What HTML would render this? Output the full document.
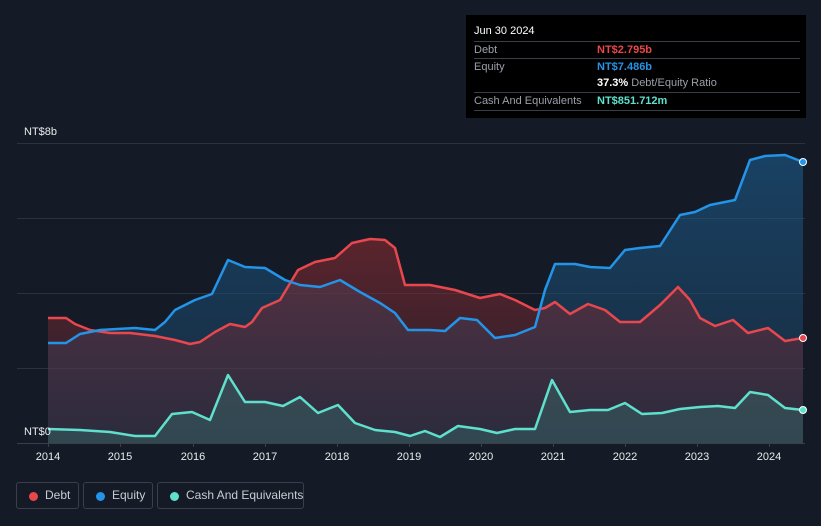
<!DOCTYPE html>
<html><head><style>
html,body{margin:0;width:821px;height:526px;overflow:hidden}
body{background:#151b26;font-family:"Liberation Sans",sans-serif;position:relative}
.tt{position:absolute;left:466px;top:15px;width:340px;height:103px;background:#000;color:#fff;font-size:11px}
.tt .h{position:absolute;left:8px;top:10px;font-size:11px}
.row{position:absolute;left:8px;width:326px;border-top:1px solid #3a3f47;height:17px;line-height:17px;white-space:nowrap}
.row span.l{color:#9aa0a8}
.row span.v{position:absolute;left:123px;font-weight:bold}
.leg{position:absolute;top:482px;height:27px;border:1px solid #3a3f4a;border-radius:3px;color:#c8ccd2;font-size:12px;line-height:25px;box-sizing:border-box;white-space:nowrap}
.leg i{position:absolute;top:9px;width:9px;height:9px;border-radius:50%}
.ax{position:absolute;top:451px;color:#e8eaed;font-size:11px;width:40px;text-align:center}
</style></head><body>
<svg width="821" height="526" style="position:absolute;left:0;top:0">
<defs>
<linearGradient id="gb" x1="0" y1="0" x2="0" y2="1"><stop offset="0" stop-color="#1c5b8c" stop-opacity=".6"/><stop offset="1" stop-color="#1c4a70" stop-opacity=".35"/></linearGradient>
<linearGradient id="gr" x1="0" y1="0" x2="0" y2="1"><stop offset="0" stop-color="#8a2a30" stop-opacity=".6"/><stop offset="1" stop-color="#5a2a35" stop-opacity=".3"/></linearGradient>
</defs>
<g stroke="#2c323d" stroke-width="1">
<line x1="17" y1="143.5" x2="805" y2="143.5"/><line x1="17" y1="218.5" x2="805" y2="218.5"/><line x1="17" y1="293.5" x2="805" y2="293.5"/><line x1="17" y1="368.5" x2="805" y2="368.5"/></g>
<polygon fill="url(#gb)" points="48,443 48,343 66,343 80,334 100,330 135,328 155,330 165,322 175,310 195,300 212,294 228,260 245,267 265,268 285,280 300,285 320,287 340,280 360,292 380,303 395,313 408,330 430,330 445,331 460,318 477,320 495,338 515,335 535,327 545,290 555,264 575,264 590,267 610,268 625,250 640,248 660,246 680,215 695,212 710,205 735,200 750,160 765,156 785,155 803,162 803,443"/>
<polygon fill="url(#gr)" points="48,443 48,318 66,318 75,324 90,330 110,333 130,333 155,336 175,340 190,344 200,342 215,332 230,324 245,327 252,322 262,308 280,300 298,270 315,262 335,258 352,243 370,239 385,240 395,248 405,285 430,285 455,290 480,298 500,294 515,300 535,310 545,308 555,302 570,314 588,304 605,310 620,322 640,322 660,305 678,287 690,300 700,318 715,326 733,320 748,333 768,328 785,341 803,338 803,443"/>
<polygon fill="#3a6a6a" fill-opacity=".45" points="48,443 48,429 80,430 110,432 135,436 155,436 172,414 192,412 210,420 228,375 245,402 265,402 283,406 300,397 318,413 338,405 355,423 375,430 395,432 410,436 425,431 440,437 458,426 480,429 497,433 515,429 535,429 552,380 570,412 590,410 608,410 625,403 642,414 662,413 680,409 700,407 718,406 735,408 750,392 768,395 785,408 803,410 803,443"/>
<g fill="none" stroke-width="2.5" stroke-linejoin="round">
<polyline stroke="#e8474d" points="48,318 66,318 75,324 90,330 110,333 130,333 155,336 175,340 190,344 200,342 215,332 230,324 245,327 252,322 262,308 280,300 298,270 315,262 335,258 352,243 370,239 385,240 395,248 405,285 430,285 455,290 480,298 500,294 515,300 535,310 545,308 555,302 570,314 588,304 605,310 620,322 640,322 660,305 678,287 690,300 700,318 715,326 733,320 748,333 768,328 785,341 803,338"/>
<polyline stroke="#2394e8" points="48,343 66,343 80,334 100,330 135,328 155,330 165,322 175,310 195,300 212,294 228,260 245,267 265,268 285,280 300,285 320,287 340,280 360,292 380,303 395,313 408,330 430,330 445,331 460,318 477,320 495,338 515,335 535,327 545,290 555,264 575,264 590,267 610,268 625,250 640,248 660,246 680,215 695,212 710,205 735,200 750,160 765,156 785,155 803,162"/>
<polyline stroke="#5ee0cc" points="48,429 80,430 110,432 135,436 155,436 172,414 192,412 210,420 228,375 245,402 265,402 283,406 300,397 318,413 338,405 355,423 375,430 395,432 410,436 425,431 440,437 458,426 480,429 497,433 515,429 535,429 552,380 570,412 590,410 608,410 625,403 642,414 662,413 680,409 700,407 718,406 735,408 750,392 768,395 785,408 803,410"/>
</g>
<circle cx="803" cy="162" r="3.5" fill="#2394e8" stroke="#fff" stroke-width="1"/>
<circle cx="803" cy="338" r="3.5" fill="#e8474d" stroke="#fff" stroke-width="1"/>
<circle cx="803" cy="410" r="3.5" fill="#5ee0cc" stroke="#fff" stroke-width="1"/>
<line x1="17" y1="443.5" x2="805" y2="443.5" stroke="#3a404a"/>
<g stroke="#3a404a"><line x1="48.5" y1="443" x2="48.5" y2="447"/><line x1="120.5" y1="443" x2="120.5" y2="447"/><line x1="193.5" y1="443" x2="193.5" y2="447"/><line x1="265.5" y1="443" x2="265.5" y2="447"/><line x1="337.5" y1="443" x2="337.5" y2="447"/><line x1="409.5" y1="443" x2="409.5" y2="447"/><line x1="481.5" y1="443" x2="481.5" y2="447"/><line x1="553.5" y1="443" x2="553.5" y2="447"/><line x1="625.5" y1="443" x2="625.5" y2="447"/><line x1="697.5" y1="443" x2="697.5" y2="447"/><line x1="769.5" y1="443" x2="769.5" y2="447"/></g>
<text x="24" y="135" fill="#e8eaed" font-size="11" font-family="Liberation Sans">NT$8b</text>
<text x="24" y="435" fill="#e8eaed" font-size="11" font-family="Liberation Sans">NT$0</text>
</svg>
<div class="ax" style="left:28px">2014</div><div class="ax" style="left:100px">2015</div><div class="ax" style="left:173px">2016</div><div class="ax" style="left:245px">2017</div><div class="ax" style="left:317px">2018</div><div class="ax" style="left:389px">2019</div><div class="ax" style="left:461px">2020</div><div class="ax" style="left:533px">2021</div><div class="ax" style="left:605px">2022</div><div class="ax" style="left:677px">2023</div><div class="ax" style="left:749px">2024</div>
<div class="tt">
<div class="h">Jun 30 2024</div>
<div class="row" style="top:26px"><span class="l">Debt</span><span class="v" style="color:#e8474d">NT$2.795b</span></div>
<div class="row" style="top:43px"><span class="l">Equity</span><span class="v" style="color:#2394e8">NT$7.486b</span></div>
<div class="row" style="top:60px;border-top:none"><span class="v" style="color:#fff">37.3% <span style="color:#9aa0a8;font-weight:normal">Debt/Equity Ratio</span></span></div>
<div class="row" style="top:77px;border-bottom:1px solid #3a3f47"><span class="l">Cash And Equivalents</span><span class="v" style="color:#5ee0cc">NT$851.712m</span></div>
</div>
<div class="leg" style="left:16px;width:63px"><i style="left:12px;background:#e8474d"></i><span style="position:absolute;left:28px">Debt</span></div>
<div class="leg" style="left:83px;width:70px"><i style="left:12px;background:#2394e8"></i><span style="position:absolute;left:28px">Equity</span></div>
<div class="leg" style="left:157px;width:147px"><i style="left:12px;background:#5ee0cc"></i><span style="position:absolute;left:28px">Cash And Equivalents</span></div>
</body></html>
